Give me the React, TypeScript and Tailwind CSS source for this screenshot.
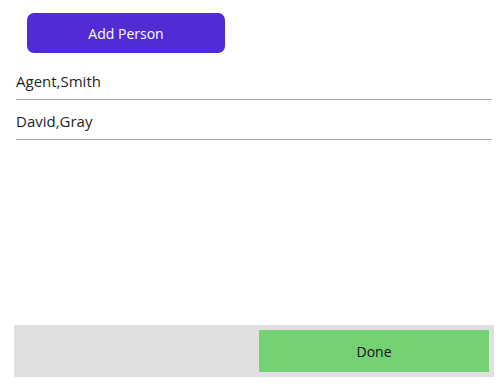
export default function App() {
  return (
    <div
      className="w-[501px] h-[384px] bg-white flex flex-col text-[#000]"
      style={{ fontFamily: '"Open Sans", sans-serif' }}
    >
      <div className="pt-[13px] pl-[27px]">
        <button className="w-[198px] h-[40px] rounded-[7px] bg-[#512bd4] text-white text-[14px] flex items-center justify-center">
          Add Person
        </button>
      </div>
      <div className="mt-[7px] ml-[16px] w-[476px] flex flex-col">
        <div className="h-[39px] pt-[2px] flex items-center text-[15px] leading-[20px] text-[#1f1f1f]">Agent,Smith</div>
        <div className="h-px bg-[#a8a8a8]" />
        <div className="h-[39px] pt-[2px] flex items-center text-[15px] leading-[20px] text-[#1f1f1f]">David,Gray</div>
        <div className="h-px bg-[#a8a8a8]" />
      </div>
      <div className="flex-1" />
      <div className="ml-[14px] mr-[7px] mb-[7px] h-[52px] bg-[#e0e0e0] flex justify-end items-center pr-[5px]">
        <button className="w-[230px] h-[42px] bg-[#74d174] text-[14px] text-[#111] flex items-center justify-center">
          Done
        </button>
      </div>
    </div>
  );
}
